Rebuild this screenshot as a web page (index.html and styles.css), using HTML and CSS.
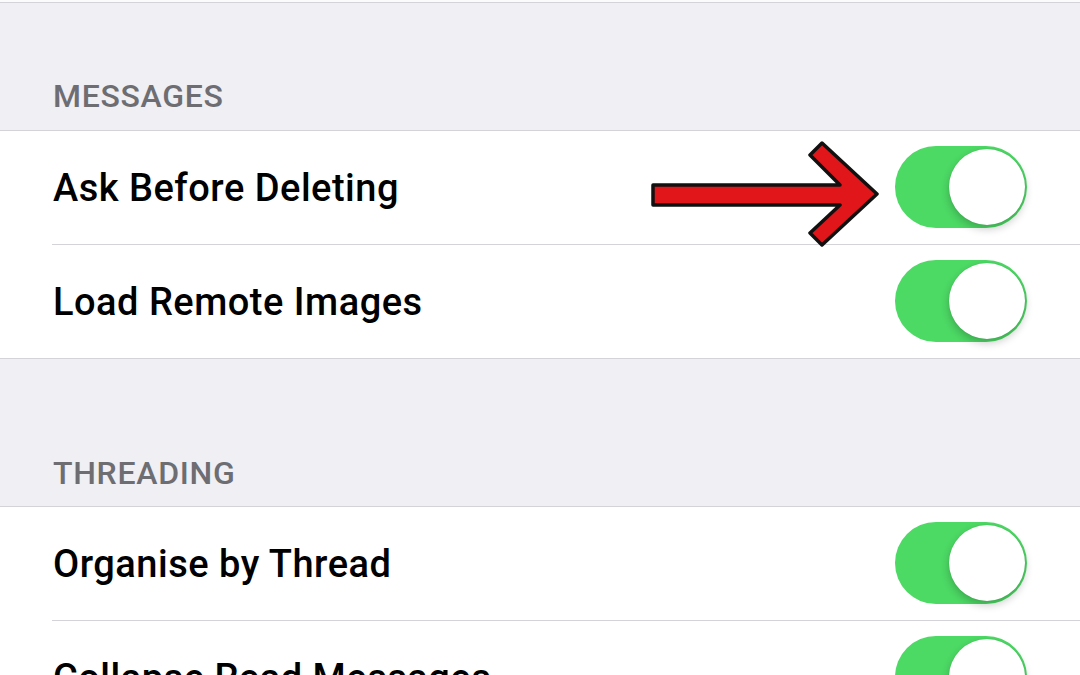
FILE: index.html
```html
<!DOCTYPE html>
<html>
<head>
<meta charset="utf-8">
<link rel="stylesheet" href="styles.css">
</head>
<body>
<div class="screen">
  <div class="top-strip"></div>
  <div class="section-header messages-header"><span>MESSAGES</span></div>
  <div class="group">
    <div class="row">
      <span class="label">Ask Before Deleting</span>
      <div class="toggle"><div class="knob"></div></div>
      <svg class="arrow" width="250" height="120" viewBox="640 135 250 120">
        <polygon points="653,185 840,185 810,155 822,143 877,194 822,245 810,233 840,205 653,205" fill="#e0161a" stroke="#111" stroke-width="3.5" stroke-linejoin="round"/>
      </svg>
    </div>
    <div class="row last">
      <span class="label">Load Remote Images</span>
      <div class="toggle"><div class="knob"></div></div>
    </div>
  </div>
  <div class="section-header threading-header"><span>THREADING</span></div>
  <div class="group">
    <div class="row">
      <span class="label">Organise by Thread</span>
      <div class="toggle"><div class="knob"></div></div>
    </div>
    <div class="row">
      <span class="label">Collapse Read Messages</span>
      <div class="toggle"><div class="knob"></div></div>
    </div>
  </div>
</div>
</body>
</html>
```

FILE: styles.css
```css
html, body {
  margin: 0;
  padding: 0;
}
body {
  background: #efeff4;
  font-family: Roboto, "Liberation Sans", Arial, sans-serif;
  width: 1080px;
  height: 675px;
  overflow: hidden;
}
.screen {
  display: flex;
  flex-direction: column;
}
.top-strip {
  height: 2px;
  background: #fbfbfc;
  border-bottom: 1px solid #d4d4d8;
}
.section-header {
  display: flex;
  align-items: flex-end;
  padding: 0 53px;
  box-sizing: border-box;
  color: #6d6d72;
  font-size: 32px;
  font-weight: 500;
  line-height: 1;
  letter-spacing: 0.7px;
}
.messages-header {
  height: 127px;
  padding-bottom: 18px;
}
.threading-header {
  height: 147px;
  padding-bottom: 17px;
}
.group {
  background: #fff;
  border-top: 1px solid #d4d4d8;
  border-bottom: 1px solid #d4d4d8;
}
.row {
  position: relative;
  height: 114px;
  box-sizing: border-box;
  display: flex;
  align-items: center;
  justify-content: space-between;
  padding: 0 53px 0 53px;
}
.row::after {
  content: "";
  position: absolute;
  left: 52px;
  right: 0;
  bottom: 0;
  height: 1px;
  background: #d4d4d8;
}
.row.last::after {
  display: none;
}
.row.last {
  height: 113px;
}
.label {
  font-size: 38px;
  font-weight: 500;
  color: #000;
  letter-spacing: 0.5px;
}
.toggle {
  width: 132px;
  height: 82px;
  border-radius: 41px;
  background: #4cd964;
  display: flex;
  align-items: center;
  justify-content: flex-end;
  padding: 0 2px;
  box-sizing: border-box;
  margin-top: -2px;
}
.knob {
  width: 76px;
  height: 76px;
  border-radius: 50%;
  background: #fff;
  box-shadow: 0 4px 8px rgba(0, 0, 0, 0.22), 0 0 1px rgba(0, 0, 0, 0.2);
}
.arrow {
  position: absolute;
  left: 640px;
  top: 4px;
  z-index: 2;
}
```
